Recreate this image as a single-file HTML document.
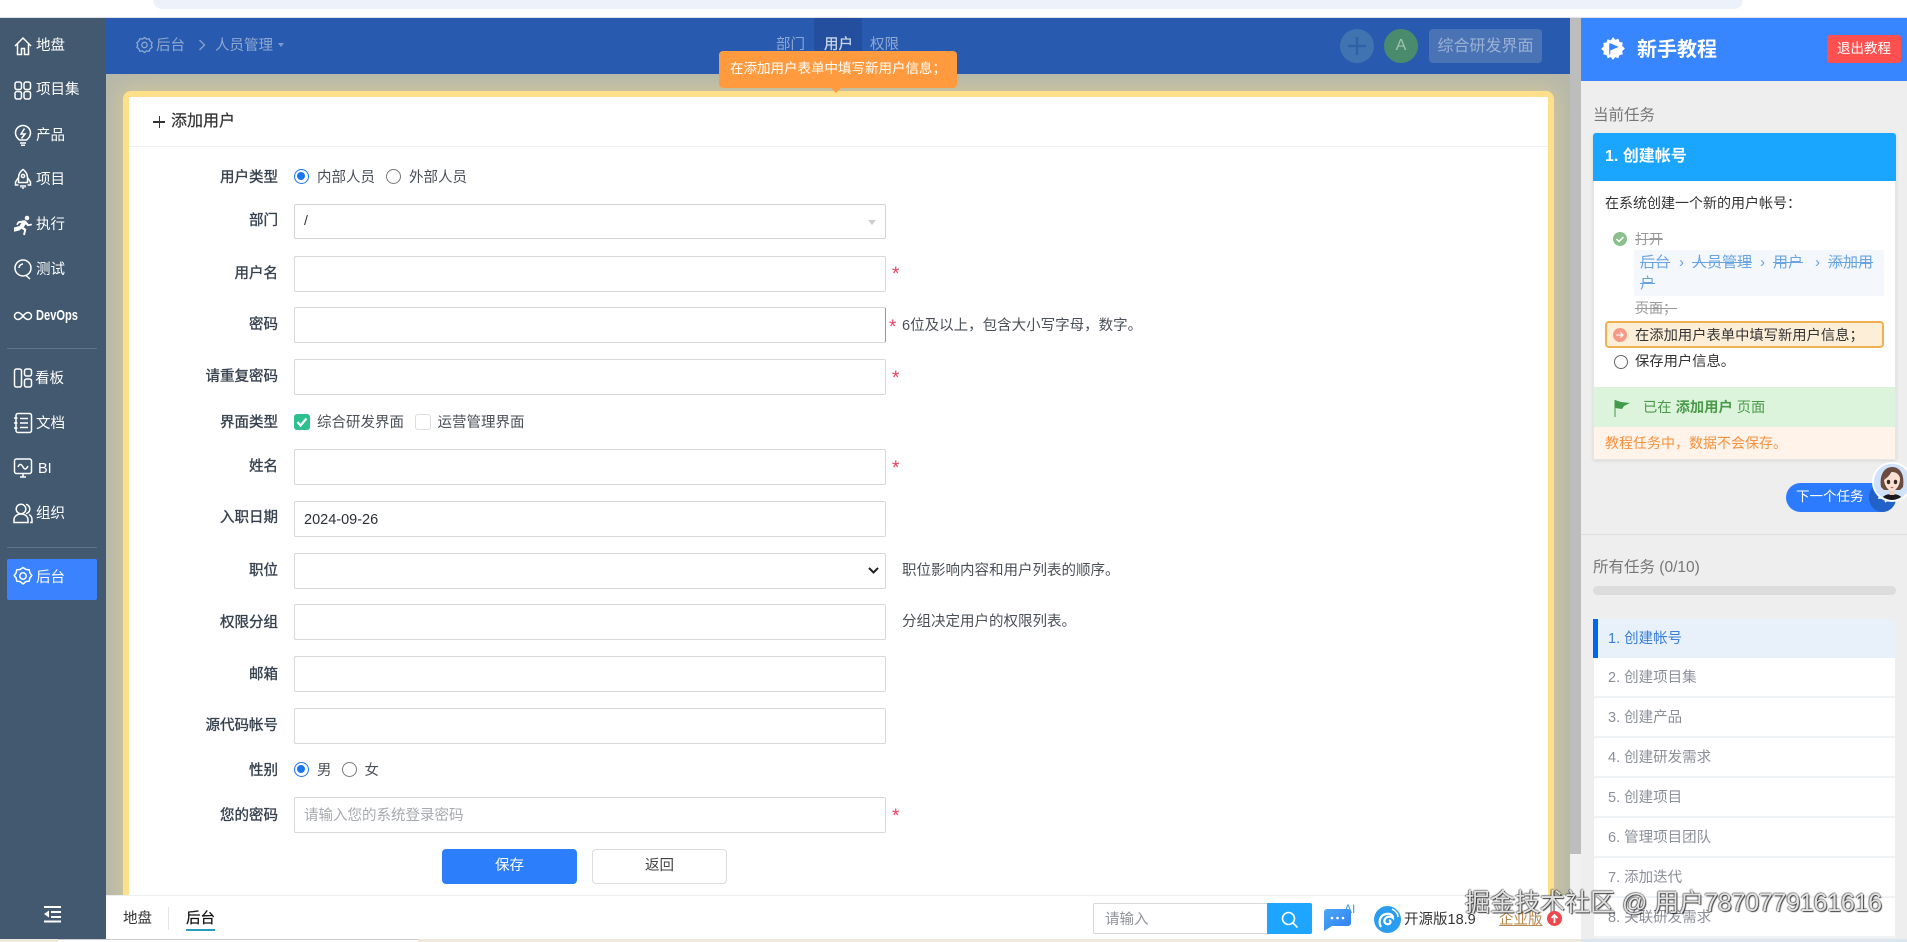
<!DOCTYPE html>
<html lang="zh"><head><meta charset="utf-8"><title>添加用户</title>
<style>
html,body{margin:0;padding:0;width:1907px;height:942px;overflow:hidden;background:#fff}
body{position:relative;font-family:"Liberation Sans","Noto Sans CJK SC",sans-serif;font-size:14.5px;color:#333}
div,span,svg{box-sizing:border-box}
.a{position:absolute}
.t{position:absolute;white-space:nowrap;line-height:20px;height:20px;margin-top:1px}
.m{color:#fff;left:36px}
.ic{position:absolute;left:13px;width:20px;height:22px;fill:none;stroke:#fff;stroke-width:1.5}
.l{position:absolute;white-space:nowrap;line-height:20px;height:20px;margin-top:1px;right:1629px;color:#36404e;-webkit-text-stroke:.35px #36404e}
.i{position:absolute;left:294px;width:592px;height:36px;background:#fff;border:1px solid #d8d8d8;border-radius:2px}
.s{position:absolute;color:#ee4060;left:892px;font-size:19px;line-height:20px;height:20px;font-family:"Liberation Sans",sans-serif}
.r{position:absolute;width:15px;height:15px;border-radius:50%;border:1px solid #777;background:#fff}
.r.on{border:1.5px solid #1a76f0}
.r.on:after{content:"";position:absolute;left:2px;top:2px;width:8px;height:8px;border-radius:50%;background:#1a76f0}
.del{text-decoration:line-through}
.lk{position:absolute;white-space:nowrap;color:#6aa3e2;font-size:15px;line-height:20px;text-decoration:line-through}
.ch{position:absolute;color:#6aa3e2;font-size:15px;line-height:20px}
.li{position:absolute;left:1594px;width:301px;height:40px;background:#fff;border-bottom:2px solid #f0f3f6}
.li span{position:absolute;left:14px;top:10px;line-height:20px;color:#8b8f98;white-space:nowrap}
</style></head><body>

<!-- browser remnant -->
<div class="a" style="left:153px;top:0;width:1590px;height:9px;background:#edf2fa;border-radius:0 0 12px 12px"></div>
<div class="a" style="left:0;top:17px;width:1907px;height:1px;background:#dfe3e8"></div>

<!-- main background -->
<div class="a" style="left:106px;top:74px;width:1464px;height:830px;background:#b6b8ab"></div>
<!-- card -->
<div class="a" style="left:123px;top:91px;width:1431px;height:860px;background:#fff;border:6px solid #ffe08a;border-radius:8px;box-shadow:0 0 18px 6px rgba(255,225,130,.3)"></div>
<div class="a" style="left:129px;top:146px;width:1419px;height:1px;background:#eef0f3"></div>

<!-- scrollbar -->
<div class="a" style="left:1570px;top:18px;width:11px;height:836px;background:#bdbdbd"></div>
<div class="a" style="left:1570px;top:854px;width:11px;height:85px;background:#f1f1f1"></div>

<!-- nav -->
<div class="a" style="left:106px;top:18px;width:1464px;height:56px;background:#285bb0"></div>
<svg class="a" style="left:136px;top:36px" width="17" height="18" viewBox="0 0 17 18" fill="none" stroke="#8fa8cf" stroke-width="1.3"><path d="M8.5 1.5l2 1.6 2.6-.4 1 2.4 2 1.6-.8 2.3.8 2.3-2 1.6-1 2.4-2.6-.4-2 1.6-2-1.6-2.6.4-1-2.4-2-1.6.8-2.3-.8-2.3 2-1.6 1-2.4 2.6.4z"/><circle cx="8.5" cy="9" r="2.7"/></svg>
<div class="t" style="left:156px;top:35px;color:#8fa8cf">后台</div>
<svg class="a" style="left:198px;top:39px" width="8" height="12" viewBox="0 0 8 12" fill="none" stroke="#7f9bc6" stroke-width="1.5"><path d="M1.5 1l5 5-5 5"/></svg>
<div class="t" style="left:215px;top:35px;color:#8fa8cf">人员管理</div>
<div class="a" style="left:278px;top:43px;border-left:3.5px solid transparent;border-right:3.5px solid transparent;border-top:4px solid #7f9bc6"></div>
<div class="a" style="left:814px;top:18px;width:48px;height:56px;background:#244f9e"></div>
<div class="t" style="left:776px;top:34px;color:#8fa8cf">部门</div>
<div class="t" style="left:824px;top:34px;color:#c9d6ea;-webkit-text-stroke:.3px #c9d6ea">用户</div>
<div class="t" style="left:870px;top:34px;color:#8fa8cf">权限</div>
<div class="a" style="left:1340px;top:29px;width:34px;height:34px;border-radius:50%;background:#3f74b0"></div>
<svg class="a" style="left:1340px;top:29px" width="34" height="34" fill="none" stroke="#2e62a8" stroke-width="2.5"><path d="M17 8v18M8 17h18"/></svg>
<div class="a" style="left:1384px;top:29px;width:34px;height:34px;border-radius:50%;background:#4a8b6d;color:#9ec4b0;text-align:center;line-height:34px;font-size:16px">A</div>
<div class="a" style="left:1429px;top:29px;width:113px;height:34px;border-radius:4px;background:#4a73b6;color:#9ab1d3;text-align:center;line-height:35px;font-size:16px;white-space:nowrap">综合研发界面</div>

<!-- tooltip -->
<div class="a" style="left:719px;top:51px;width:238px;height:37px;background:#ff9b3e;border-radius:4px;color:#fff;font-size:13.5px;line-height:35px;padding-left:11px;white-space:nowrap">在添加用户表单中填写新用户信息；</div>
<div class="a" style="left:831px;top:88px;border-left:5px solid transparent;border-right:5px solid transparent;border-top:5px solid #ff9b3e"></div>

<!-- sidebar -->
<div class="a" style="left:0;top:18px;width:106px;height:921px;background:#42596f"></div>
<svg class="ic" style="top:35px" viewBox="0 0 20 22"><path d="M2 11l8-8 8 8M4.5 9v10.500h4v-6h3v6h4V9"/></svg>
<div class="t m" style="top:35px">地盘</div>
<svg class="ic" style="top:79px" viewBox="0 0 20 22"><rect x="2" y="3" width="6.500" height="7.500" rx="2"/><rect x="11" y="3" width="6.500" height="7.500" rx="2"/><rect x="2" y="12.500" width="6.500" height="7.500" rx="2"/><rect x="11" y="12.500" width="6.500" height="7.500" rx="2"/></svg>
<div class="t m" style="top:79px">项目集</div>
<svg class="ic" style="top:124px" viewBox="0 0 20 22"><path d="M6.500 16C4 14 2.500 12 2.500 9a7.500 7.500 0 0 1 15 0c0 3-1.500 5-4 7zM7 19h6M8 21.200h4M11.500 4.500L8 10h4l-3.500 4.500"/></svg>
<div class="t m" style="top:125px">产品</div>
<svg class="ic" style="top:168px" viewBox="0 0 20 22"><path d="M10 1.500c3 2 4.500 5 4.500 8.500v4.500h-9V10c0-3.500 1.500-6.500 4.500-8.500zM5.500 9.500L2.500 14v3h3M14.500 9.500l3 4.500v3h-3M8 17v2.500M12 17v2.500M10 17v4"/><circle cx="10" cy="8" r="1.600"/></svg>
<div class="t m" style="top:169px">项目</div>
<svg class="ic" style="top:214px;fill:#fff;stroke:none" viewBox="0 0 20 22"><circle cx="14" cy="4" r="2.300"/><path d="M1 13.500l5.500-1.500 2-3-2.500.3-1.500 2-1.300-1 2-3 6-1 1.500.5 3 3.500 3-.7.300 1.600-4.300 1-2-2-2 3 2.700 2-1.500 6-1.800-.4 1-4.500-3-1.500-1.200 1.500-5.800 1.500z"/></svg>
<div class="t m" style="top:214px">执行</div>
<svg class="ic" style="top:258px" viewBox="0 0 20 22"><circle cx="10" cy="10" r="8"/><path d="M12.500 17l4.500 4M6 10a4 4 0 0 1 4-4"/></svg>
<div class="t m" style="top:259px">测试</div>
<svg class="ic" style="top:305px" viewBox="0 0 20 22"><path d="M10 11c-2-2.500-3.500-3.500-5-3.500a3.500 3.500 0 0 0 0 7c1.500 0 3-1 5-3.500 2-2.500 3.500-3.500 5-3.500a3.500 3.500 0 0 1 0 7c-1.500 0-3-1-5-3.500z"/></svg>
<div class="t m" style="top:305px;font-weight:bold;font-size:15px;transform:scaleX(.74);transform-origin:0 50%">DevOps</div>
<div class="a" style="left:7px;top:348px;width:90px;height:1px;background:#5f7488"></div>
<svg class="ic" style="top:367px" viewBox="0 0 20 22"><rect x="1.500" y="2" width="7" height="18" rx="2"/><rect x="11.500" y="2" width="7" height="7" rx="2"/><rect x="11.500" y="12" width="7" height="8" rx="2"/></svg>
<div class="t m" style="top:368px;left:35px">看板</div>
<svg class="ic" style="top:412px" viewBox="0 0 20 22"><rect x="3" y="1.500" width="15.500" height="19" rx="2"/><path d="M7 6.500h8M7 11h8M7 15.500h8M1 6h3.500M1 11h3.500M1 16h3.500"/></svg>
<div class="t m" style="top:413px">文档</div>
<svg class="ic" style="top:457px" viewBox="0 0 20 22"><rect x="1.500" y="2" width="17" height="14.500" rx="2"/><path d="M5 10c1.500-3.500 3-3.500 5 0s3.500 2 5-1M7 20h6M10 16.500V20"/></svg>
<div class="t" style="left:38px;top:458px;color:#fff">BI</div>
<svg class="ic" style="top:502px" viewBox="0 0 20 22"><circle cx="8" cy="7" r="4.800"/><path d="M1 20.500v-2.500c0-3.500 3-6 7-6s7 2.500 7 6v2.500zM13 2.300a4.800 4.800 0 0 1 0 9.400M16 12.500c2 1 3 3 3 5.500v2.500h-2"/></svg>
<div class="t m" style="top:503px">组织</div>
<div class="a" style="left:7px;top:547px;width:90px;height:1px;background:#5f7488"></div>
<div class="a" style="left:7px;top:559px;width:90px;height:41px;background:#3a82ff;border-radius:2px"></div>
<svg class="ic" style="top:566px" viewBox="0 0 20 22"><path d="M10 1.500l3 2 3.200.3.700 3 1.900 2.700-1.900 2.500-.7 3.200-3.200.3-3 2.500-3-2.500-3.200-.3-.7-3.200L1.200 9.500l1.900-2.700.7-3L7 3.500z"/><circle cx="10" cy="10" r="3.200"/></svg>
<div class="t m" style="top:567px">后台</div>
<svg class="a" style="left:44px;top:906px" width="18" height="17" viewBox="0 0 18 17" fill="#fff"><rect width="17" height="2"/><rect x="7" y="5" width="10" height="2"/><rect x="7" y="10" width="10" height="2"/><rect y="14.500" width="17" height="2"/><path d="M5 4.500v7L0 8z"/></svg>

<!-- form -->
<div class="a" style="left:153px;top:121px;width:12px;height:1.500px;background:#333"></div>
<div class="a" style="left:158.500px;top:115.500px;width:1.500px;height:12px;background:#333"></div>
<div class="t" style="left:171px;top:111px;font-size:16px;color:#333;-webkit-text-stroke:.2px #333">添加用户</div>

<div class="l" style="top:167px">用户类型</div>
<div class="r on" style="left:294px;top:169px"></div>
<div class="t" style="left:317px;top:167px;color:#4a4f58">内部人员</div>
<div class="r" style="left:386px;top:169px"></div>
<div class="t" style="left:409px;top:167px;color:#4a4f58">外部人员</div>

<div class="l" style="top:210px">部门</div>
<div class="i" style="top:204px;height:35px;border-color:#d4d4d4"><span class="a" style="left:9px;top:5px;line-height:20px;font-size:14px">/</span>
<span class="a" style="left:573px;top:15px;border-left:4px solid transparent;border-right:4px solid transparent;border-top:5px solid #ccc"></span></div>

<div class="l" style="top:263px">用户名</div>
<div class="i" style="top:256px"></div><div class="s" style="top:265px">*</div>

<div class="l" style="top:314px">密码</div>
<div class="i" style="top:307px;border-right-color:#999"></div><div class="s" style="top:318px;left:889px">*</div>
<div class="t" style="left:902px;top:315px;color:#4a4f58">6位及以上，包含大小写字母，数字。</div>

<div class="l" style="top:366px">请重复密码</div>
<div class="i" style="top:359px"></div><div class="s" style="top:369px">*</div>

<div class="l" style="top:412px">界面类型</div>
<div class="a" style="left:294px;top:414px;width:16px;height:16px;background:#2cc090;border-radius:3px"></div>
<svg class="a" style="left:294px;top:414px" width="16" height="16" fill="none" stroke="#fff" stroke-width="2.2"><path d="M3.500 8l3 3.500 6-7"/></svg>
<div class="t" style="left:317px;top:412px;color:#4a4f58">综合研发界面</div>
<div class="a" style="left:415px;top:414px;width:16px;height:16px;background:#fff;border:1px solid #ddd;border-radius:3px"></div>
<div class="t" style="left:437.500px;top:412px;color:#4a4f58">运营管理界面</div>

<div class="l" style="top:456px">姓名</div>
<div class="i" style="top:449px"></div><div class="s" style="top:459px">*</div>

<div class="l" style="top:507px">入职日期</div>
<div class="i" style="top:501px"><span class="a" style="left:9px;top:8px;line-height:20px;font-size:14.500px;color:#2b2f36;white-space:nowrap">2024-09-26</span></div>

<div class="l" style="top:560px">职位</div>
<div class="i" style="top:553px"></div>
<svg class="a" style="left:868px;top:567px" width="11" height="7" fill="none" stroke="#222" stroke-width="2"><path d="M1 1l4.500 4.500L10 1"/></svg>
<div class="t" style="left:902px;top:560px;color:#4a4f58">职位影响内容和用户列表的顺序。</div>

<div class="l" style="top:612px">权限分组</div>
<div class="i" style="top:604px"></div>
<div class="t" style="left:902px;top:611px;color:#4a4f58">分组决定用户的权限列表。</div>

<div class="l" style="top:664px">邮箱</div>
<div class="i" style="top:656px"></div>

<div class="l" style="top:715px">源代码帐号</div>
<div class="i" style="top:708px"></div>

<div class="l" style="top:760px">性别</div>
<div class="r on" style="left:294px;top:762px"></div>
<div class="t" style="left:317px;top:760px;color:#4a4f58">男</div>
<div class="r" style="left:342px;top:762px"></div>
<div class="t" style="left:364.500px;top:760px;color:#4a4f58">女</div>

<div class="l" style="top:805px">您的密码</div>
<div class="i" style="top:797px"><span class="a" style="left:9px;top:8px;line-height:20px;color:#a6a9ae;white-space:nowrap">请输入您的系统登录密码</span></div>
<div class="s" style="top:807px">*</div>

<div class="a" style="left:442px;top:849px;width:135px;height:35px;background:#2c7efb;border-radius:4px;color:#fff;text-align:center;line-height:34px">保存</div>
<div class="a" style="left:592px;top:849px;width:135px;height:35px;background:#fff;border:1px solid #ddd;border-radius:4px;color:#444;text-align:center;line-height:33px">返回</div>

<!-- bottom bar -->
<div class="a" style="left:106px;top:895px;width:1475px;height:44px;background:#fff;border-top:1px solid #eceef0"></div>
<div class="t" style="left:123px;top:908px;color:#333">地盘</div>
<div class="a" style="left:168px;top:907px;width:1px;height:23px;background:#e2e4e7"></div>
<div class="t" style="left:186px;top:908px;color:#111;-webkit-text-stroke:.25px #111">后台</div>
<div class="a" style="left:186px;top:929px;width:29px;height:2px;background:#2a9cc0"></div>
<div class="a" style="left:1093px;top:903px;width:175px;height:31px;background:#fff;border:1px solid #d8d8d8;border-radius:2px 0 0 2px"></div>
<div class="t" style="left:1105px;top:909px;color:#8f9299">请输入</div>
<div class="a" style="left:1267px;top:903px;width:45px;height:31px;background:#1ea5ff;border-radius:0 2px 2px 0"></div>
<svg class="a" style="left:1281px;top:911px" width="18" height="18" fill="none" stroke="#fff" stroke-width="1.600"><circle cx="7.500" cy="7.500" r="6"/><path d="M12 12l4.500 4.500"/></svg>
<svg class="a" style="left:1323px;top:904px" width="34" height="28" viewBox="0 0 34 28"><defs><linearGradient id="g" x1="0" y1="0" x2="1" y2="1"><stop offset="0" stop-color="#4aa8f5"/><stop offset="1" stop-color="#2f7df0"/></linearGradient></defs><path d="M4 5h21a3 3 0 0 1 3 3v11a3 3 0 0 1-3 3H9l-8 5V8a3 3 0 0 1 3-3z" fill="url(#g)"/><g fill="#fff"><circle cx="9" cy="14" r="1.300"/><circle cx="14.500" cy="14" r="1.300"/><circle cx="20" cy="14" r="1.300"/></g></svg>
<div class="t" style="left:1344px;top:898px;color:#3d94f5;font-size:12px">AI</div>
<svg class="a" style="left:1373px;top:905px" width="29" height="29" viewBox="0 0 29 29"><circle cx="14.500" cy="14.500" r="13.500" fill="#2a9df0"/><path d="M8 22c-3-5-1-12 5-13 4-1 7 1 7 4-2-2-6-2-8 1-2 3 1 6 4 5 2-1 2-3 0-4" fill="none" stroke="#fff" stroke-width="2.200"/><path d="M19 4c4 2 6 5 6 8" fill="none" stroke="#fff" stroke-width="1.500"/></svg>
<div class="t" style="left:1404px;top:909px;color:#333;font-size:14.500px">开源版18.9</div>
<div class="t" style="left:1499px;top:909px;color:#b98a50;text-decoration:underline">企业版</div>
<svg class="a" style="left:1547px;top:911px;z-index:10" width="15" height="15" viewBox="0 0 15 15"><circle cx="7.500" cy="7.500" r="7.500" fill="#f0474c"/><path d="M7.500 12V4M4.500 7l3-3 3 3" fill="none" stroke="#fff" stroke-width="1.800"/></svg>

<!-- tutorial panel -->
<div class="a" style="left:1581px;top:18px;width:326px;height:921px;background:#eee;overflow:hidden">
  <div class="a" style="left:0;top:0;width:326px;height:63px;background:#3785ff"></div>
</div>
<svg class="a" style="left:1600px;top:36px" width="26" height="26" viewBox="0 0 24 24"><path d="M12 1l2 2.500 3-1 1 3 3 .500-.500 3 2.500 2.500-2.500 2.500.500 3-3 .500-1 3-3-1-2 2.500-2-2.500-3 1-1-3-3-.500.500-3L1 12l2.500-2.500L3 6.500l3-.500 1-3 3 1z" fill="#fff"/><path d="M9 7v10M9 7l7 3-7 3" fill="#3785ff" stroke="#3785ff" stroke-width="1"/></svg>
<div class="t" style="left:1637px;top:39px;color:#fff;font-size:20px;font-weight:bold">新手教程</div>
<div class="a" style="left:1827px;top:35px;width:74px;height:28px;background:#ff5050;border-radius:3px;color:#fff;font-size:13.500px;text-align:center;line-height:27px;white-space:nowrap">退出教程</div>

<div class="t" style="left:1593px;top:105px;color:#777;font-size:15.500px">当前任务</div>
<div class="a" style="left:1593px;top:133px;width:303px;height:327px;background:#fff;border:1px solid #e6e6e6;border-radius:3px 3px 0 0;box-shadow:0 1px 3px rgba(0,0,0,.1)"></div>
<div class="a" style="left:1593px;top:133px;width:303px;height:48px;background:#1aa5ff;border-radius:3px 3px 0 0"></div>
<div class="t" style="left:1605px;top:146px;color:#fff;font-size:16px;font-weight:bold">1. 创建帐号</div>
<div class="t" style="left:1605px;top:192px;color:#333;font-size:14px">在系统创建一个新的用户帐号：</div>
<div class="a" style="left:1613px;top:232px;width:14px;height:14px;border-radius:50%;background:#8bc08b"></div>
<svg class="a" style="left:1613px;top:232px" width="14" height="14" fill="none" stroke="#fff" stroke-width="1.500"><path d="M3.500 7l2.500 2.500 4.500-4.500"/></svg>
<div class="t del" style="left:1635px;top:228px;color:#999;font-size:14px">打开</div>
<div class="a" style="left:1634px;top:250px;width:250px;height:46px;background:#f4f8fd"></div>
<div class="lk" style="left:1640px;top:253px">后台</div>
<div class="ch" style="left:1679px;top:253px">›</div>
<div class="lk" style="left:1692px;top:253px">人员管理</div>
<div class="ch" style="left:1760px;top:253px">›</div>
<div class="lk" style="left:1773px;top:253px">用户</div>
<div class="ch" style="left:1815px;top:253px">›</div>
<div class="lk" style="left:1828px;top:253px">添加用</div>
<div class="lk" style="left:1640px;top:274px">户</div>
<div class="t del" style="left:1635px;top:297px;color:#999;font-size:14px">页面；</div>
<div class="a" style="left:1605px;top:321px;width:279px;height:27px;background:#fdeed8;border:2px solid #f0b050;border-radius:4px"></div>
<svg class="a" style="left:1613px;top:328px" width="14" height="14" viewBox="0 0 14 14"><circle cx="7" cy="7" r="7" fill="#f59a86"/><path d="M3.500 7h6.500M7.500 4.500L10 7l-2.500 2.500" fill="none" stroke="#fff" stroke-width="1.200"/></svg>
<div class="t" style="left:1635px;top:325px;color:#333;font-size:14.300px">在添加用户表单中填写新用户信息；</div>
<div class="a" style="left:1614px;top:355px;width:14px;height:14px;border-radius:50%;border:1px solid #666;background:#fff"></div>
<div class="t" style="left:1635px;top:351px;color:#333;font-size:14.300px">保存用户信息。</div>
<div class="a" style="left:1594px;top:387px;width:301px;height:40px;background:#dcf4dc"></div>
<svg class="a" style="left:1614px;top:399px" width="17" height="18" viewBox="0 0 17 18"><path d="M1 1v17" stroke="#3f9a4a" stroke-width="1"/><path d="M1 1l6 2 9 1-6 3-2 3-7-1z" fill="#3f9a4a"/></svg>
<div class="t" style="left:1643px;top:397px;color:#4a9a4a;font-size:14.300px">已在 <b>添加用户</b> 页面</div>
<div class="a" style="left:1594px;top:427px;width:301px;height:32px;background:#fff3ea"></div>
<div class="t" style="left:1605px;top:432px;color:#f5923e;font-size:14px">教程任务中，数据不会保存。</div>

<div class="a" style="left:1786px;top:483px;width:110px;height:29px;background:#2c7bff;border-radius:15px"></div>
<div class="a" style="left:1869px;top:483px;width:27px;height:29px;background:#2262c8;border-radius:15px"></div>
<svg class="a" style="left:1876px;top:490px" width="18" height="16" fill="none" stroke="#fff" stroke-width="1.500"><path d="M2 8h12M9 4l5 4-5 4"/></svg>
<div class="t" style="left:1796px;top:486px;color:#fff;font-size:13.500px">下一个任务</div>
<svg class="a" style="left:1872px;top:461px" width="35" height="42" viewBox="0 0 35 42">
  <circle cx="20" cy="21" r="20" fill="#fff"/><circle cx="20" cy="21" r="18.200" fill="#cfe2fa"/>
  <path d="M9 26C7 13 13 6 20 6s13 6 11 20l-3 3H12z" fill="#6b4a40"/>
  <path d="M11 36c3-4 15-4 18 0 0 0-4 3-9 3s-9-3-9-3z" fill="#1b1b1f"/>
  <rect x="17.500" y="28" width="5" height="6" fill="#f3cdb9"/>
  <path d="M12 18c0-4 3.500-7 8-7s8 3 8 7c0 6-4 12-8 12s-8-6-8-12z" fill="#fae2d3"/>
  <path d="M12 19c0-6 3-9 8-10-1 4-4 7-8 10z" fill="#6b4a40"/>
  <ellipse cx="16.500" cy="21" rx="1.700" ry="2.200" fill="#3a2820"/><ellipse cx="23.500" cy="21" rx="1.700" ry="2.200" fill="#3a2820"/>
  <path d="M18.700 26.500h2.600" stroke="#d0626a" stroke-width="1.300"/>
</svg>

<div class="a" style="left:1581px;top:534px;width:326px;height:1px;background:#dedede"></div>
<div class="t" style="left:1593px;top:557px;color:#777;font-size:15.500px">所有任务 (0/10)</div>
<div class="a" style="left:1593px;top:586px;width:303px;height:9px;background:#dcdcdc;border-radius:5px"></div>

<div class="a" style="left:1593px;top:619px;width:302px;height:39px;background:#e8f1fa;border-radius:3px 3px 0 0"></div>
<div class="a" style="left:1593px;top:619px;width:5px;height:39px;background:#0068f0"></div>
<div class="t" style="left:1608px;top:628px;color:#3a7fd8">1. 创建帐号</div>
<div class="li" style="top:658px"><span>2. 创建项目集</span></div>
<div class="li" style="top:698px"><span>3. 创建产品</span></div>
<div class="li" style="top:738px"><span>4. 创建研发需求</span></div>
<div class="li" style="top:778px"><span>5. 创建项目</span></div>
<div class="li" style="top:818px"><span>6. 管理项目团队</span></div>
<div class="li" style="top:858px"><span>7. 添加迭代</span></div>
<div class="li" style="top:898px"><span>8. 关联研发需求</span></div>

<!-- bottom strip -->
<div class="a" style="left:0;top:939px;width:1581px;height:3px;background:#efe8dc"></div>
<div class="a" style="left:58px;top:939px;width:360px;height:3px;background:#fff;border-top:1px solid #ccc"></div>
<div class="a" style="left:1581px;top:939px;width:326px;height:3px;background:#dde6ee"></div>

<!-- watermark -->
<div class="t" style="left:1465px;top:885px;height:34px;line-height:34px;font-size:25px;color:rgba(240,240,240,.92);text-shadow:1px 1px 1px rgba(0,0,0,.75),-1px 0 1px rgba(0,0,0,.5),0 -1px 1px rgba(0,0,0,.4);z-index:9">掘金技术社区 @ 用户<span style="letter-spacing:-.25px">7870779161616</span></div>
</body></html>
